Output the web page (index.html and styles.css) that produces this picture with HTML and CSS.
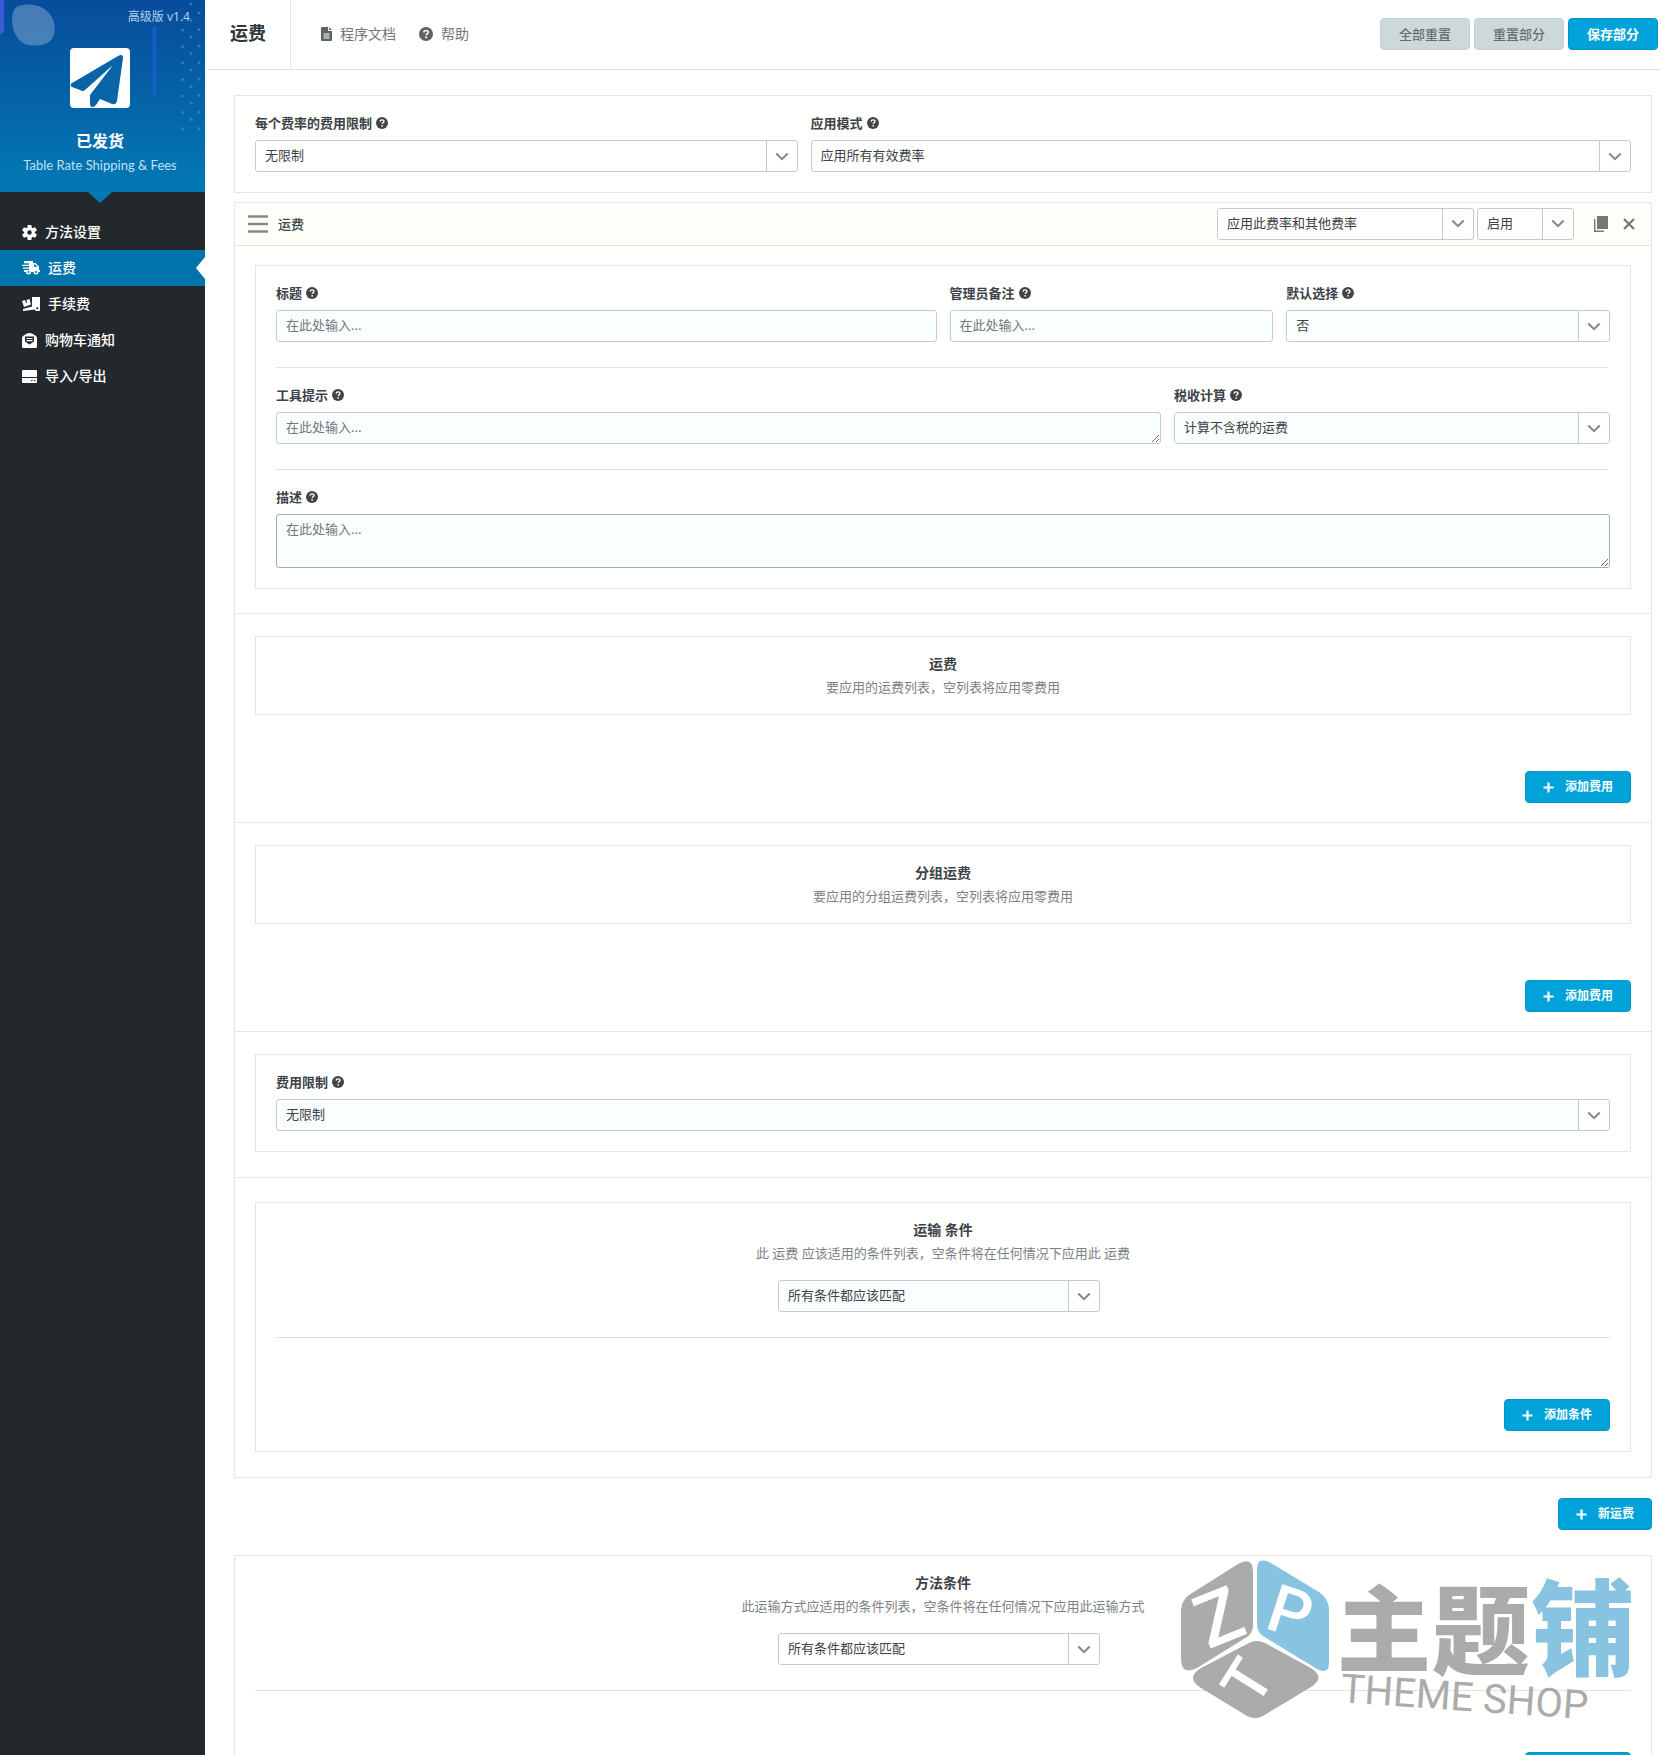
FILE: index.html
```html
<!DOCTYPE html>
<html lang="zh-CN">
<head>
<meta charset="utf-8">
<meta name="viewport" content="width=device-width, initial-scale=1">
<title>运费</title>
<link rel="stylesheet" href="styles.css">
</head>
<body>
<svg class="sprite" aria-hidden="true">
  <symbol id="i-help" viewBox="0 0 16 16"><circle cx="8" cy="8" r="8" fill="currentColor"/><path d="M5.4 6.2C5.6 4.6 6.6 3.9 8 3.9c1.500 0 2.600.8 2.600 2.100 0 1.700-2.300 1.700-2.300 3.300" fill="none" stroke="#fff" stroke-width="1.800"/><circle cx="8.200" cy="11.800" r="1.200" fill="#fff"/></symbol>
  <symbol id="i-down" viewBox="0 0 16 10"><path d="M1.500 1.500 8 8l6.500-6.500" fill="none" stroke="currentColor" stroke-width="2.400"/></symbol>
  <symbol id="i-plus" viewBox="0 0 12 12"><path d="M6 .5v11M.5 6h11" stroke="currentColor" stroke-width="2.400"/></symbol>
</svg>
<div class="app">
  <aside class="sidebar">
    <header class="brand">
      <svg class="brand-art" viewBox="0 0 205 192" preserveAspectRatio="none" aria-hidden="true">
        <path d="M18 6c9-3 22-2 29 5 8 7 10 20 5 28-5 7-18 8-27 5-9-4-13-15-13-25 0-6 2-11 6-13z" fill="#fff" opacity=".26"/>
        <path d="M0 0h4v30q0 4-4 4z" fill="#3d5ad8"/>
        <path d="M154.500 28v66" stroke="#1f5fd0" stroke-width="4" stroke-linecap="round" opacity=".7"/>
        <path d="M191 4v120M182.500 30v100M199 13v116" stroke="#3f8fd6" stroke-width="3" stroke-linecap="round" stroke-dasharray="0 16.500" opacity=".65"/>
      </svg>
      <span class="version">高级版 v1.4</span>
      <svg class="logo" viewBox="0 0 60 60" role="img" aria-label="已发货"><rect width="60" height="60" rx="4" fill="#fff"/><path d="M2 35 48 8q5-3 5 2l-6 43q-1 4-5 3L30 51l-4 6q-5 5-6-1V47L43 17 15 42q-2 2-5 0l-8-3q-3-2 0-4z" fill="#0a65a8"/></svg>
      <strong class="brand-name">已发货</strong>
      <span class="brand-sub">Table Rate Shipping &amp; Fees</span>
    </header>
    <nav class="menu">
      <a href="#method"><svg width="15" height="15" viewBox="0 0 16 16"><g fill="currentColor"><circle cx="8" cy="8" r="5.500"/><path id="tooth" d="M6 0h4l.5 4h-5zM6 16h4l.5-4h-5z"/><use href="#tooth" transform="rotate(60 8 8)"/><use href="#tooth" transform="rotate(120 8 8)"/></g><circle cx="8" cy="8" r="2.400" fill="#23282d"/></svg>方法设置</a>
      <a class="active" href="#rates" aria-current="page"><svg width="18" height="14" viewBox="0 0 18 14"><path d="M2 0h9v2h2.500L17 5.500V9h1v2h-1.500a2.500 2.500 0 0 1-5 0H9a2.500 2.500 0 0 1-5 0H2V9h5V7.800H1V6.500h6V5H0V3.700h7V2.300H2z" fill="currentColor"/><path d="M12 3.500v2.300h3.500L13.200 3.500z" fill="#0073aa"/><circle cx="6.500" cy="11" r="1" fill="#0073aa"/><circle cx="14" cy="11" r="1" fill="#0073aa"/></svg>运费</a>
      <a href="#fees"><svg width="18" height="14" viewBox="0 0 18 14"><path d="m0 4 3-1 1 3 1-.4L4.500 3l3-1L9 7.500 2 10zM10 0h8v11.500a2.500 2.500 0 0 1-5 1L1 14v-2l9-2.500z" fill="currentColor"/><circle cx="15.300" cy="11.300" r="1.100" fill="#23282d"/></svg>手续费</a>
      <a href="#notices"><svg width="15" height="15" viewBox="0 0 15 15"><path d="M4 1q3.500-2 7 0l3 2q1 1 1 2v8.500q0 1.500-1.500 1.500h-12Q0 15 0 13.500V5q0-1 1-2zM3 3.500v5l4.500 3 4.500-3v-5z" fill="currentColor" fill-rule="evenodd"/><path d="M4.500 5.500h6M4.500 7.700h6" stroke="currentColor" stroke-width="1.200"/></svg>购物车通知</a>
      <a href="#transfer"><svg width="15" height="13" viewBox="0 0 15 13"><path d="M1 0h13q1 0 1 1v6H0V1q0-1 1-1zM0 8h15v4q0 1-1 1H1q-1 0-1-1z" fill="currentColor"/><path d="M9 10.500h1.500M12 10.500h1.500" stroke="#23282d"/></svg>导入/导出</a>
    </nav>
  </aside>

  <main class="main">
    <header class="topbar">
      <h1>运费</h1>
      <nav class="links">
        <a href="#docs"><svg width="11" height="14" viewBox="0 0 11 14"><path d="M1 0h6v4h4v9q0 1-1 1H1q-1 0-1-1V1q0-1 1-1zM8 0l3 3H8z" fill="currentColor"/><path d="M2.500 7h6M2.500 9h6M2.500 11h6" stroke="#fff"/></svg>程序文档</a>
        <a href="#help"><svg width="14" height="14"><use href="#i-help"/></svg>帮助</a>
      </nav>
      <div class="actions">
        <button class="btn grey" type="button">全部重置</button>
        <button class="btn grey" type="button">重置部分</button>
        <button class="btn" type="button">保存部分</button>
      </div>
    </header>

    <form class="content">
      <section class="panel box fields tenths">
        <div class="field w4"><label for="limit">每个费率的费用限制 <svg class="q"><use href="#i-help"/></svg></label>
          <div class="select"><select id="limit"><option>无限制</option></select><svg><use href="#i-down"/></svg></div></div>
        <div class="field w6"><label for="mode">应用模式 <svg class="q"><use href="#i-help"/></svg></label>
          <div class="select"><select id="mode"><option>应用所有有效费率</option></select><svg><use href="#i-down"/></svg></div></div>
      </section>

      <section class="panel rate">
        <header class="rate-head">
          <svg class="grip" width="20" height="18" viewBox="0 0 20 18"><path d="M0 1.500h20M0 9h20M0 16.500h20" stroke="currentColor" stroke-width="2.600"/></svg>
          <h2>运费</h2>
          <div class="select apply"><select aria-label="应用方式"><option>应用此费率和其他费率</option></select><svg><use href="#i-down"/></svg></div>
          <div class="select state"><select aria-label="状态"><option>启用</option></select><svg><use href="#i-down"/></svg></div>
          <button class="icon copy" type="button" aria-label="复制"><svg width="14" height="16" viewBox="0 0 14 16"><path d="M3 0h11v13H3z" fill="currentColor"/><path d="M.7 3v12.300H10" fill="none" stroke="currentColor" stroke-width="1.400"/></svg></button>
          <button class="icon" type="button" aria-label="删除"><svg width="12" height="12" viewBox="0 0 12 12"><path d="m1 1 10 10M11 1 1 11" stroke="currentColor" stroke-width="2.200"/></svg></button>
        </header>

        <div class="section first">
          <div class="box inner tinted">
            <div class="fields">
              <div class="field w6"><label for="title">标题 <svg class="q"><use href="#i-help"/></svg></label><input id="title" type="text" placeholder="在此处输入..."></div>
              <div class="field w3"><label for="note">管理员备注 <svg class="q"><use href="#i-help"/></svg></label><input id="note" type="text" placeholder="在此处输入..."></div>
              <div class="field w3"><label for="default">默认选择 <svg class="q"><use href="#i-help"/></svg></label>
                <div class="select"><select id="default"><option>否</option></select><svg><use href="#i-down"/></svg></div></div>
            </div>
            <hr>
            <div class="fields">
              <div class="field w8"><label for="tip">工具提示 <svg class="q"><use href="#i-help"/></svg></label><textarea id="tip" rows="1" placeholder="在此处输入..."></textarea></div>
              <div class="field w4"><label for="tax">税收计算 <svg class="q"><use href="#i-help"/></svg></label>
                <div class="select"><select id="tax"><option>计算不含税的运费</option></select><svg><use href="#i-down"/></svg></div></div>
            </div>
            <hr>
            <div class="fields">
              <div class="field w12"><label for="desc">描述 <svg class="q"><use href="#i-help"/></svg></label><textarea id="desc" class="tall" rows="2" placeholder="在此处输入..."></textarea></div>
            </div>
          </div>
        </div>

        <div class="section list">
          <div class="inner notice"><h3>运费</h3><p>要应用的运费列表，空列表将应用零费用</p></div>
          <button class="btn add" type="button"><svg><use href="#i-plus"/></svg>添加费用</button>
        </div>
        <div class="section list">
          <div class="inner notice"><h3>分组运费</h3><p>要应用的分组运费列表，空列表将应用零费用</p></div>
          <button class="btn add" type="button"><svg><use href="#i-plus"/></svg>添加费用</button>
        </div>
        <div class="section">
          <div class="box inner tinted fields">
            <div class="field w12"><label for="cost">费用限制 <svg class="q"><use href="#i-help"/></svg></label>
              <div class="select"><select id="cost"><option>无限制</option></select><svg><use href="#i-down"/></svg></div></div>
          </div>
        </div>
        <div class="section last">
          <div class="inner notice conditions tinted">
            <h3>运输 条件</h3><p>此 运费 应该适用的条件列表，空条件将在任何情况下应用此 运费</p>
            <div class="select match"><select aria-label="运输条件匹配"><option>所有条件都应该匹配</option></select><svg><use href="#i-down"/></svg></div>
            <hr>
            <button class="btn add" type="button"><svg><use href="#i-plus"/></svg>添加条件</button>
          </div>
        </div>
      </section>

      <button class="btn add new" type="button"><svg><use href="#i-plus"/></svg>新运费</button>

      <section class="panel notice conditions method">
        <h3>方法条件</h3><p>此运输方式应适用的条件列表，空条件将在任何情况下应用此运输方式</p>
        <div class="select match"><select aria-label="方法条件匹配"><option>所有条件都应该匹配</option></select><svg><use href="#i-down"/></svg></div>
        <hr>
        <button class="btn add" type="button"><svg><use href="#i-plus"/></svg>添加条件</button>
        <svg class="watermark" viewBox="0 0 470 176" role="img" aria-label="主题铺 THEME SHOP">
          <g fill="#ababab">
            <path d="M57 5q15-8 15 8v53q0 8-6 12L16 109q-16 8-16-10V52q0-10 8-16z"/>
            <path d="M68 84q8-4 16 0l44 24q18 10 2 20l-48 29q-8 4-16 0l-46-28q-16-10 0-20z"/>
            <g class="mark-main"><text x="156" y="106" font-size="94">主</text><text x="251" y="108" font-size="98">题</text></g>
            <text class="mark-sub" x="159" y="143" font-size="40" transform="rotate(4 159 143)">THEME SHOP</text>
          </g>
          <g fill="#88c3e2">
            <path d="M76 10q0-12 12-7l50 30q10 7 10 18v53q0 12-12 6L82 77q-6-4-6-12z"/>
            <text class="mark-main" x="350" y="109" font-size="104">铺</text>
          </g>
          <g class="mark-letter" fill="#fff" text-anchor="middle">
            <text x="38" y="84" font-size="74" transform="rotate(-22 38 58)">Z</text>
            <text x="109" y="76" font-size="66" transform="rotate(18 109 54)">P</text>
            <text x="66" y="144" font-size="62" transform="rotate(-58 66 122)">T</text>
          </g>
        </svg>
      </section>
    </form>
  </main>
</div>
</body>
</html>
```
FILE: styles.css
```css
* { box-sizing: border-box; }
body {
  margin: 0;
  background: #fff;
  color: #3a3f42;
  font: 13px/20px "Noto Sans", "Noto Sans CJK SC", sans-serif;
}
h1, h2, h3, p { margin: 0; }
a { color: inherit; text-decoration: none; }
button, input, select, textarea { font: inherit; color: inherit; }
.sprite { position: absolute; width: 0; height: 0; }

.app { display: flex; height: 100vh; }

/* Sidebar */
.sidebar { flex: none; width: 205px; background: #23282d; color: #fff; }
.brand {
  position: relative;
  display: flex;
  flex-direction: column;
  align-items: center;
  height: 192px;
  padding: 8px 5px 0 0;
  background: linear-gradient(#074c9b, #0279b4);
}
.brand::after {
  content: "";
  position: absolute;
  top: 100%;
  left: 88px;
  border: 12px solid transparent;
  border-top: 11px solid #0279b4;
  border-bottom: 0;
}
.brand-art { position: absolute; inset: 0; width: 100%; height: 100%; }
.brand > :not(.brand-art) { z-index: 1; }
.version { align-self: flex-end; margin-right: 10px; font-size: 12px; line-height: 18px; color: #b7d3ee; }
.logo { width: 60px; height: 60px; margin-top: 22px; }
.brand-name { margin-top: 21px; font-size: 16px; line-height: 24px; }
.brand-sub { line-height: 24px; font-family: Lato, sans-serif; color: #bfe2f5; }
.menu { padding-top: 22px; }
.menu a {
  position: relative;
  display: flex;
  align-items: center;
  gap: 8px;
  height: 36px;
  padding-left: 22px;
  font-size: 14px;
  font-weight: 500;
}
.menu .active { background: #0073aa; }
.menu .active::after {
  content: "";
  position: absolute;
  right: 0;
  border: 11px solid transparent;
  border-right: 9px solid #fff;
  border-left: 0;
}

/* Top bar */
.main { flex: 1; min-width: 0; overflow-y: auto; scrollbar-width: none; }
.topbar {
  display: flex;
  align-items: center;
  height: 70px;
  margin-left: 3px;
  padding: 0 3px 2px 0;
  border-bottom: 1px solid #dfe2e5;
}
.topbar h1 {
  align-self: stretch;
  width: 83px;
  padding-left: 22px;
  border-right: 1px solid #e2e4e7;
  font-size: 18px;
  font-weight: 700;
  line-height: 67px;
  color: #32373c;
}
.links { display: flex; gap: 23px; margin-left: 30px; font-size: 14px; color: #72777c; }
.links a { display: flex; align-items: center; gap: 8px; }
.links svg { color: #5c6368; }
.actions { display: flex; gap: 4px; margin-left: auto; }
.btn {
  display: inline-flex;
  align-items: center;
  justify-content: center;
  height: 32px;
  min-width: 90px;
  padding: 0 17px;
  border: 1px solid #0595c6;
  border-radius: 4px;
  background: #00a3d9;
  color: #fff;
  font-weight: 700;
}
.btn.grey { border-color: #c5d0d4; background: #cdd8da; color: #666e72; font-weight: 500; }
.btn.add { display: flex; gap: 11px; min-width: 0; margin-left: auto; font-size: 12px; }
.btn.add svg { width: 11px; height: 11px; }

/* Panels */
.content { padding: 25px 9px 0 29px; }
.panel { border: 1px solid #e3e5e7; background: #fffffd; }
.box { padding: 17px 20px 20px; }
.inner { border: 1px solid #e3e5e7; background: #fff; }
.box.inner hr { margin: 25px 2px 17px 0; }
hr { height: 1px; margin: 0; border: 0; background: #e0e2e4; }
.fields { display: grid; grid-template-columns: repeat(12, 1fr); column-gap: 13px; }
.tenths { grid-template-columns: repeat(10, 1fr); }
.w3 { grid-column: span 3; }
.w4 { grid-column: span 4; }
.w6 { grid-column: span 6; }
.w8 { grid-column: span 8; }
.w12 { grid-column: span 12; }
.field { display: flex; flex-direction: column; gap: 7px; min-width: 0; }
.field label { display: flex; align-items: center; gap: 4px; font-weight: 700; color: #3c4247; }
.q { width: 12px; height: 12px; color: #444; }

input, textarea, .select {
  width: 100%;
  height: 32px;
  border: 1px solid #c6cacd;
  border-radius: 3px;
  background: #fff;
}
input, textarea { display: block; padding: 4px 9px 6px; color: #32373c; }
textarea { overflow: hidden; }
textarea.tall { height: 54px; border-color: #a5abb0; }
::placeholder { color: #72777c; opacity: 1; }
.select { display: grid; grid-template-columns: 1fr 30px; }
.select select {
  grid-area: 1 / 1 / 2 / 2;
  appearance: none;
  width: 100%;
  height: 30px;
  padding: 0 9px 2px;
  border: 0;
  border-right: 1px solid #c6cacd;
  border-radius: 3px 0 0 3px;
  background: #fff;
  color: #3c4247;
}
.select svg { width: 14px; height: 9px; place-self: center; color: #888; pointer-events: none; }
.tinted input, .tinted textarea, .tinted .select select { background: #f9fefe; }

/* Rate */
.rate { margin-top: 9px; }
.rate-head {
  display: flex;
  align-items: center;
  height: 43px;
  padding: 0 16px 1px 13px;
  border-bottom: 1px solid #dfe1e3;
  background: #fffffa;
}
.grip { color: #888; }
.rate-head h2 { margin: 0 auto 0 10px; font-size: 13px; font-weight: 500; }
.apply { width: 257px; margin-right: 3px; }
.state { width: 97px; margin-right: 20px; }
.icon { display: flex; padding: 0; border: 0; background: none; color: #777; }
.copy { margin-right: 15px; }
.section { padding: 22px 20px 25px; border-bottom: 1px solid #e3e5e7; }
.section.first { padding: 19px 20px 24px; }
.section.list { padding-bottom: 19px; }
.section.last { padding-top: 24px; border-bottom: 0; }
.list .btn { margin-top: 56px; }

.notice { padding: 16px 20px 15px; text-align: center; }
.notice h3 { font-size: 14px; font-weight: 700; line-height: 22px; color: #3c4247; }
.notice p { line-height: 24px; color: #7c8186; }
.conditions { padding-bottom: 20px; }
.match { width: 322px; margin: 15px auto 25px; position: relative; right: 4px; text-align: left; }
.conditions .btn { margin-top: 61px; }

.new { margin-top: 20px; }
.method { position: relative; margin-top: 25px; }
.watermark { position: absolute; top: 3px; right: 0; width: 470px; height: 176px; overflow: visible; pointer-events: none; }
.mark-main { font-family: "Noto Sans CJK SC", sans-serif; font-weight: 900; }
.mark-sub { font-family: Roboto, sans-serif; font-weight: 400; }
.mark-letter { font-family: Roboto, sans-serif; font-weight: 500; }
```
